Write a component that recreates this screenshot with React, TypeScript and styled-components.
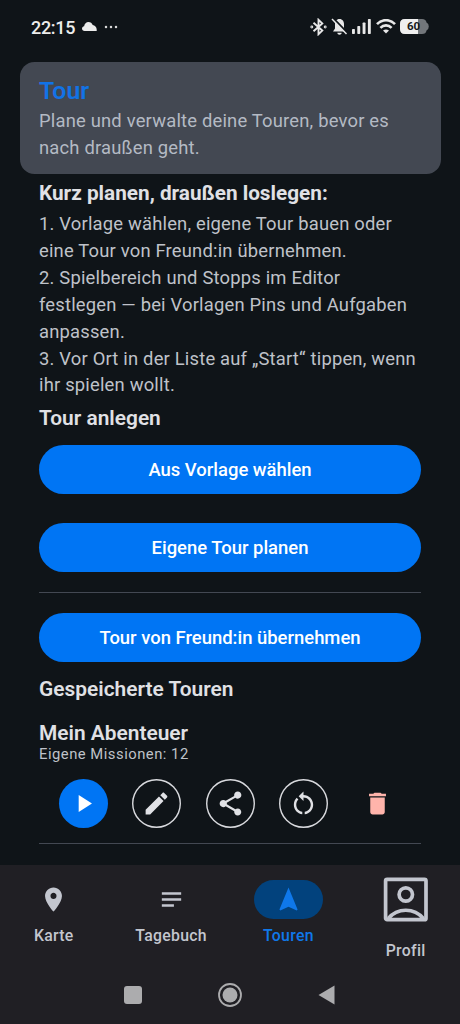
import React from "react";
import styled, { createGlobalStyle } from "styled-components";

const Global = createGlobalStyle`
  * { box-sizing: border-box; }
  body { margin: 0; background: #0f1418; }
`;

const Screen = styled.div`
  width: 460px;
  height: 1024px;
  display: flex;
  flex-direction: column;
  overflow: hidden;
  background: #0f1418;
  color: #e2e2e6;
  font-family: Roboto, "Liberation Sans", sans-serif;
`;

const StatusBar = styled.header`
  height: 62px;
  flex: none;
  display: flex;
  align-items: center;
  justify-content: space-between;
  padding: 0 31px 9px 31px;
`;

const StatusGroup = styled.div<{ $gap: number }>`
  display: flex;
  align-items: center;
  gap: ${(p) => p.$gap}px;
`;

const Clock = styled.span`
  padding-top: 2px;
  font-size: 18px;
  line-height: 22px;
  font-weight: 500;
  letter-spacing: -0.3px;
  color: #ececec;
`;

const Battery = styled.div`
  width: 29px;
  height: 15px;
  display: grid;
  place-items: center;
  > * { grid-area: 1 / 1; }
`;

const BatteryLevel = styled.span`
  font-size: 11.5px;
  line-height: 15px;
  font-weight: 700;
  color: #15191c;
  padding-right: 2px;
`;

const Card = styled.section`
  flex: none;
  height: 112px;
  margin: 0 19.5px;
  padding: 11px 19.5px;
  border-radius: 14.5px;
  background: #434852;
`;

const CardTitle = styled.h1`
  margin: 0;
  font-size: 24.8px;
  line-height: 35px;
  font-weight: 600;
  color: #1273e6;
`;

const Body = styled.p<{ $tone?: string; $top?: number }>`
  margin: ${(p) => p.$top ?? 0}px 0 0;
  font-size: 18.4px;
  line-height: 26.9px;
  letter-spacing: 0.19px;
  white-space: pre-line;
  color: ${(p) => p.$tone ?? "#bfc2c9"};
`;

const Content = styled.main`
  flex: 1;
  display: flex;
  flex-direction: column;
  padding: 3px 39px 0;
`;

const Heading = styled.h2<{ $bold?: boolean; $top?: number }>`
  margin: ${(p) => p.$top ?? 0}px 0 0;
  font-size: ${(p) => (p.$bold ? 20.75 : 20.9)}px;
  line-height: 32px;
  font-weight: ${(p) => (p.$bold ? 700 : 600)};
  color: #e0e1e5;
`;

const Button = styled.button<{ $top: number }>`
  flex: none;
  height: 49px;
  margin: ${(p) => p.$top}px 0 0;
  padding: 1px 0 0;
  border: 0;
  border-radius: 25px;
  background: #0075f4;
  color: #fff;
  font: 500 18.45px/24px Roboto, "Liberation Sans", sans-serif;
`;

const Divider = styled.hr<{ $top: number }>`
  flex: none;
  width: 100%;
  height: 1px;
  margin: ${(p) => p.$top}px 0 0;
  border: 0;
  background: #434852;
`;

const Caption = styled.p`
  margin: -4.5px 0 0;
  font-size: 14.8px;
  line-height: 20px;
  letter-spacing: 0.5px;
  color: #bfc2c9;
`;

const Actions = styled.div`
  display: flex;
  gap: 24.5px;
  margin: 14.5px 0 0 19.6px;
`;

const Action = styled.button<{ $kind: "filled" | "outlined" | "plain" }>`
  width: 49px;
  height: 49px;
  padding: 0;
  display: grid;
  place-items: center;
  border-radius: 50%;
  border: 0;
  box-shadow: ${(p) => (p.$kind === "outlined" ? "inset 0 0 0 1.4px #d9dade" : "none")};
  background: ${(p) => (p.$kind === "filled" ? "#0075f4" : "transparent")};
  color: ${(p) => (p.$kind === "filled" ? "#fff" : p.$kind === "plain" ? "#ffb4ab" : "#e0e1e5")};
`;

const BottomBar = styled.nav`
  flex: none;
  height: 159px;
  display: flex;
  flex-direction: column;
  background: #201f24;
`;

const Tabs = styled.div`
  height: 101px;
  display: grid;
  grid-template-columns: repeat(4, 107.6px);
  column-gap: 9.7px;
`;

const Tab = styled.div<{ $active?: boolean; $top?: number }>`
  display: flex;
  flex-direction: column;
  align-items: center;
  padding-top: ${(p) => p.$top ?? 15.4}px;
  color: ${(p) => (p.$active ? "#0f78ea" : "#c3c6cf")};
`;

const Pill = styled.div<{ $active?: boolean; $tall?: boolean }>`
  width: 69px;
  height: ${(p) => (p.$tall ? 48 : 39)}px;
  display: grid;
  place-items: center;
  border-radius: 20px;
  background: ${(p) => (p.$active ? "#02427d" : "transparent")};
`;

const TabLabel = styled.span<{ $top?: number }>`
  margin-top: ${(p) => p.$top ?? 6}px;
  font-size: 15.8px;
  line-height: 21px;
  font-weight: 500;
  letter-spacing: 0.3px;
`;

const SystemNav = styled.div`
  height: 58px;
  display: flex;
  align-items: center;
  justify-content: center;
  gap: 72px;
`;

const Material = ({ d, size = 29 }: { d: string; size?: number }) => (
  <svg width={size} height={size} viewBox="0 0 24 24" fill="currentColor">
    <path d={d} />
  </svg>
);

const icons = {
  play: "M8 5v14l11-7z",
  edit: "M3 17.25V21h3.75L17.81 9.94l-3.75-3.75L3 17.25zM20.71 7.04c.39-.39.39-1.02 0-1.41l-2.34-2.34c-.39-.39-1.02-.39-1.41 0l-1.83 1.83 3.75 3.75 1.83-1.83z",
  share: "M18 16.08c-.76 0-1.44.3-1.96.77L8.91 12.7c.05-.23.09-.46.09-.7s-.04-.47-.09-.7l7.05-4.11c.54.5 1.25.81 2.04.81 1.66 0 3-1.34 3-3s-1.34-3-3-3-3 1.34-3 3c0 .24.04.47.09.7L8.04 9.81C7.5 9.31 6.79 9 6 9c-1.66 0-3 1.34-3 3s1.34 3 3 3c.79 0 1.5-.31 2.04-.81l7.12 4.16c-.05.21-.08.43-.08.65 0 1.61 1.31 2.92 2.92 2.92 1.61 0 2.92-1.31 2.92-2.92s-1.31-2.92-2.92-2.92z",
  restart: "M12 5V2L8 6l4 4V7c3.31 0 6 2.69 6 6 0 2.97-2.17 5.43-5 5.91v2.02c3.95-.49 7-3.85 7-7.93 0-4.42-3.58-8-8-8zM6 13c0-1.65.67-3.15 1.76-4.24L6.34 7.34C4.9 8.79 4 10.79 4 13c0 4.08 3.05 7.44 7 7.93v-2.02c-2.83-.48-5-2.94-5-5.91z",
  trash: "M6 19c0 1.1.9 2 2 2h8c1.1 0 2-.9 2-2V7H6v12zM19 4h-3.5l-1-1h-5l-1 1H5v2h14V4z",
  pin: "M12 2C8.13 2 5 5.13 5 9c0 5.25 7 13 7 13s7-7.75 7-13c0-3.87-3.13-7-7-7zm0 9.5c-1.38 0-2.5-1.12-2.5-2.5s1.12-2.5 2.5-2.5 2.5 1.12 2.5 2.5-1.12 2.5-2.5 2.5z",
  notes: "M4 18h10v-2H4v2zM4 6v2h16V6H4zm0 7h16v-2H4v2z",
  navigation: "M12 2L4.5 20.29l.71.71L12 18l6.79 3 .71-.71z",
};

const steps = `1. Vorlage wählen, eigene Tour bauen oder
eine Tour von Freund:in übernehmen.
2. Spielbereich und Stopps im Editor
festlegen — bei Vorlagen Pins und Aufgaben
anpassen.
3. Vor Ort in der Liste auf „Start“ tippen, wenn
ihr spielen wollt.`;

export default function App() {
  return (
    <Screen>
      <Global />
      <StatusBar>
        <StatusGroup $gap={7}>
          <Clock>22:15</Clock>
          <svg width="15" height="9" viewBox="0 0 15 9" fill="#ececec">
            <path d="M2.6 9C1 9 0 8 0 6.6 0 5.3 1 4.4 2.1 4.2 2.5 1.7 4.2 0 6.5 0c2 0 3.5 1.1 4.2 3.1C12.8 3.4 14.7 5.3 14.7 7.6V9z" />
          </svg>
          <svg width="14" height="4" viewBox="0 0 14 4" fill="#d8d8d8">
            <circle cx="2" cy="2" r="1.25" /><circle cx="7" cy="2" r="1.25" /><circle cx="12" cy="2" r="1.25" />
          </svg>
        </StatusGroup>
        <StatusGroup $gap={4}>
          <svg width="17" height="18" viewBox="0 0 17 18" fill="none" stroke="#e8e8e8" strokeWidth="1.9">
            <path d="M3.5 4.8 12.3 12.6 8.5 16.2V1.8L12.3 5.4 3.5 13.2" />
            <circle cx="1.8" cy="9" r=".5" /><circle cx="15.2" cy="9" r=".5" />
          </svg>
          <svg width="17" height="18" viewBox="0 0 17 18">
            <path d="M8.5 1C5.5 1 4 3.5 4 6v4.5L2 13.5h13L13 10.5V6C13 3.5 11.5 1 8.5 1zM6.3 14.7h4.4c0 2.6-4.4 2.6-4.4 0z" fill="#e8e8e8" />
            <path d="M2.3.3 16.5 15" stroke="#0f1418" strokeWidth="2" />
            <path d="M1 1 15.5 16" stroke="#e8e8e8" strokeWidth="1.5" />
          </svg>
          <svg width="20" height="15" viewBox="0 0 20 15" fill="#e8e8e8">
            <rect x="0" y="10" width="2.9" height="5" rx=".7" /><rect x="5.3" y="7" width="2.9" height="8" rx=".7" />
            <rect x="10.6" y="3.5" width="2.9" height="11.5" rx=".7" /><rect x="15.9" y="0" width="2.9" height="15" rx=".7" />
          </svg>
          <svg width="20" height="15" viewBox="0 0 20 15" fill="none" stroke="#e8e8e8" strokeWidth="2.6">
            <path d="M1 5.2C6-.2 14-.2 19 5.2M4.4 8.8c3.2-3.2 8-3.2 11.2 0" />
            <path d="M7 11.6c2-1.5 4-1.5 6 0L10 14.6z" fill="#e8e8e8" stroke="none" />
          </svg>
          <Battery>
            <svg width="29" height="15" viewBox="0 0 29 15">
              <path d="M5 0h17q4 0 4.500 3.500 2.300 1.200 2.300 4t-2.300 4Q26 15 22 15H5Q0 15 0 10V5Q0 0 5 0z" fill="#72767a" />
              <path d="M18 0H5Q0 0 0 5v5q0 5 5 5h13z" fill="#efefef" />
            </svg>
            <BatteryLevel>60</BatteryLevel>
          </Battery>
        </StatusGroup>
      </StatusBar>

      <Card>
        <CardTitle>Tour</CardTitle>
        <Body $tone="#b4bac4">{"Plane und verwalte deine Touren, bevor es\nnach draußen geht."}</Body>
      </Card>

      <Content>
        <Heading $bold>Kurz planen, draußen loslegen:</Heading>
        <Body $top={2}>{steps}</Body>
        <Heading $top={3}>Tour anlegen</Heading>
        <Button $top={10.5}>Aus Vorlage wählen</Button>
        <Button $top={29.5}>Eigene Tour planen</Button>
        <Divider $top={20} />
        <Button $top={19.5}>Tour von Freund:in übernehmen</Button>
        <Heading $top={11}>Gespeicherte Touren</Heading>
        <Heading $top={12}>Mein Abenteuer</Heading>
        <Caption>Eigene Missionen: 12</Caption>
        <Actions>
          <Action $kind="filled" aria-label="Start"><Material d={icons.play} /></Action>
          <Action $kind="outlined" aria-label="Bearbeiten"><Material d={icons.edit} /></Action>
          <Action $kind="outlined" aria-label="Teilen"><Material d={icons.share} /></Action>
          <Action $kind="outlined" aria-label="Zurücksetzen"><Material d={icons.restart} /></Action>
          <Action $kind="plain" aria-label="Löschen"><Material d={icons.trash} /></Action>
        </Actions>
        <Divider $top={15} />
      </Content>

      <BottomBar>
        <Tabs>
          <Tab><Pill><Material d={icons.pin} /></Pill><TabLabel>Karte</TabLabel></Tab>
          <Tab><Pill><Material d={icons.notes} /></Pill><TabLabel>Tagebuch</TabLabel></Tab>
          <Tab $active><Pill $active><Material d={icons.navigation} /></Pill><TabLabel>Touren</TabLabel></Tab>
          <Tab $top={10.5}>
            <Pill $tall>
              <svg width="45" height="45" viewBox="0 0 45 45" fill="none" stroke="currentColor" strokeWidth="3.7">
                <rect x="2.6" y="2.3" width="40.4" height="40.4" rx="1.5" />
                <circle cx="22.8" cy="17.5" r="6.7" />
                <path d="M5.3 41.5c9-11 26-11 35 0" />
              </svg>
            </Pill>
            <TabLabel $top={16}>Profil</TabLabel>
          </Tab>
        </Tabs>
        <SystemNav>
          <svg width="24" height="24" viewBox="0 0 24 24"><rect x="3" y="3" width="18" height="18" rx="3" fill="#acacae" /></svg>
          <svg width="26" height="26" viewBox="0 0 26 26">
            <circle cx="13" cy="13" r="11" fill="none" stroke="#acacae" strokeWidth="1.8" /><circle cx="13" cy="13" r="7.5" fill="#acacae" />
          </svg>
          <svg width="24" height="24" viewBox="0 0 24 24"><path d="M3.5 12 19.500 2.500v19z" fill="#acacae" /></svg>
        </SystemNav>
      </BottomBar>
    </Screen>
  );
}
